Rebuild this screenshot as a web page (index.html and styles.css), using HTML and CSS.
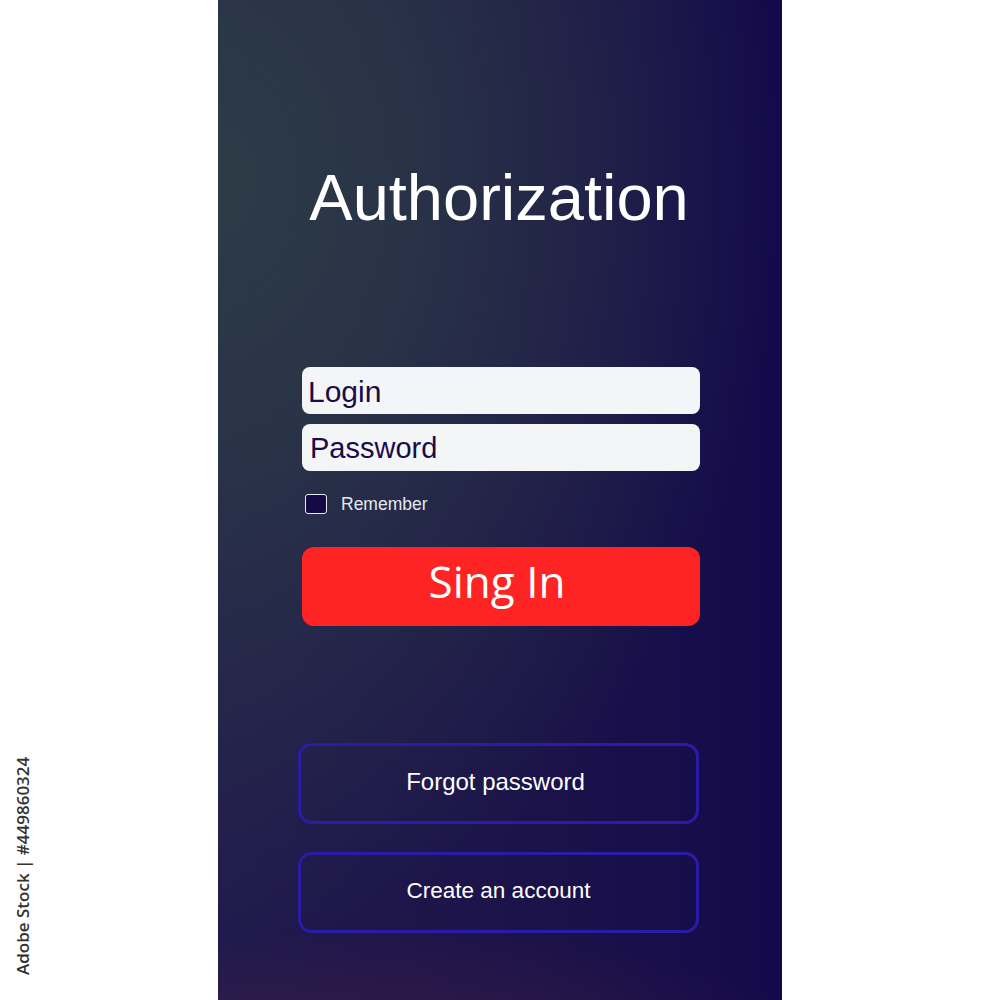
FILE: index.html
```html
<!DOCTYPE html>
<html>
<head>
<meta charset="utf-8">
<link rel="stylesheet" href="styles.css">
</head>
<body>
<div class="page">
  <div class="credit">Adobe Stock | #449860324</div>
  <main class="phone">
    <h1 class="title">Authorization</h1>
    <form class="form">
      <div class="field">Login</div>
      <div class="field field-pass">Password</div>
      <label class="remember"><span class="check"></span><span class="remember-text">Remember</span></label>
      <div class="signin">Sing In</div>
    </form>
    <div class="links">
      <div class="link link-forgot">Forgot password</div>
      <div class="link link-create">Create an account</div>
    </div>
  </main>
</div>
</body>
</html>
```
FILE: styles.css
```css
html, body {
  margin: 0;
  padding: 0;
  background: #ffffff;
}
.page {
  position: relative;
  width: 1000px;
  height: 1000px;
  display: flex;
  justify-content: flex-start;
}
.credit {
  position: absolute;
  left: 11px;
  top: 756px;
  height: 220px;
  writing-mode: vertical-rl;
  transform: rotate(180deg);
  font-family: "Open Sans", "Liberation Sans", sans-serif;
  font-size: 17px;
  font-weight: 600;
  color: #333333;
  text-align: center;
  white-space: nowrap;
}
.phone {
  margin-left: 218px;
  width: 564px;
  height: 1000px;
  box-sizing: border-box;
  padding-top: 165px;
  display: flex;
  flex-direction: column;
  background:
    radial-gradient(ellipse 420px 110px at 30% 104%, rgba(72, 30, 66, 0.5), rgba(72, 30, 66, 0) 100%),
    radial-gradient(ellipse 560px 760px at 0% 18%, rgba(44, 60, 70, 1) 0%, rgba(44, 60, 70, 0.75) 35%, rgba(44, 60, 70, 0) 100%),
    linear-gradient(to right, #211a4d 0%, #1b1249 60%, #140a4b 100%);
  font-family: "Liberation Sans", Arial, sans-serif;
}
.title {
  margin: 0;
  font-weight: 400;
  font-size: 65px;
  line-height: 65px;
  height: 65px;
  color: #ffffff;
  text-align: center;
  padding-right: 2px;
}
.form {
  margin: 137px 0 0 84px;
  width: 398px;
  display: flex;
  flex-direction: column;
}
.field {
  height: 47px;
  line-height: 49px;
  box-sizing: border-box;
  padding-left: 6px;
  background: #f4f5f6;
  border-radius: 8px;
  color: #1a0b4b;
  font-size: 30px;
}
.field-pass {
  margin-top: 10px;
  padding-left: 8px;
  font-size: 29px;
}
.remember {
  margin-top: 22px;
  height: 22px;
  display: flex;
  align-items: center;
  padding-left: 3px;
}
.check {
  width: 20px;
  height: 18px;
  border: 1.5px solid #e8e8f2;
  border-radius: 3px;
  background: #150a45;
}
.remember-text {
  margin-left: 14px;
  font-size: 17.5px;
  color: #e6e6ee;
}
.signin {
  margin-top: 32px;
  height: 79px;
  border-radius: 12px;
  background: #ff2424;
  color: #ffffff;
  font-family: "Open Sans", "Liberation Sans", sans-serif;
  font-size: 44px;
  line-height: 68px;
  text-align: center;
  padding-right: 8px;
}
.links {
  margin: 117px 0 0 80px;
  width: 401px;
  display: flex;
  flex-direction: column;
  gap: 28px;
}
.link {
  height: 81px;
  box-sizing: border-box;
  border: 3px solid #2b1ca6;
  border-radius: 14px;
  display: flex;
  align-items: center;
  justify-content: center;
  color: #ffffff;
}
.link-forgot {
  font-size: 24px;
  padding-bottom: 4px;
  padding-right: 6px;
}
.link-create {
  font-size: 22.5px;
  padding-bottom: 4px;
}
```
